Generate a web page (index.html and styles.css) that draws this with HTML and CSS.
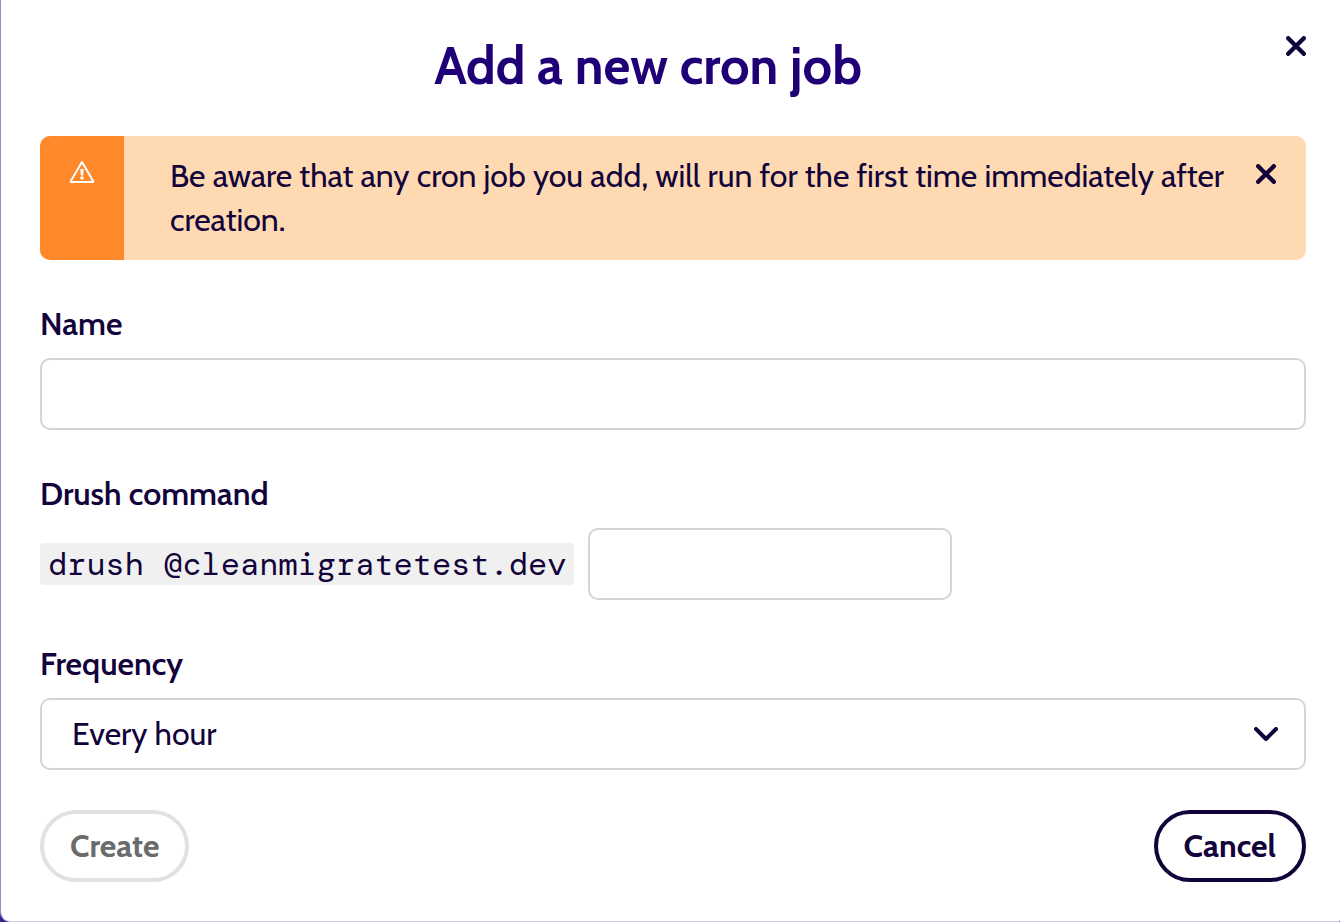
FILE: index.html
```
<!DOCTYPE html>
<html lang="en">
<head>
  <meta charset="UTF-8">
  <meta name="viewport" content="width=device-width, initial-scale=1.0">
  <title>Add a new cron job</title>
  <link rel="stylesheet" href="styles.css">
</head>
<body>
  <div class="modal" role="dialog" aria-labelledby="modal-title">
    <header class="modal-header">
      <h1 class="modal-title" id="modal-title">Add a new cron job</h1>
      <button type="button" class="close-button" aria-label="Close">
        <svg class="icon-close" viewBox="0 0 20 20"><path d="M2.200 2.200l15.600 15.600M17.800 2.200L2.200 17.800"/></svg>
      </button>
    </header>

    <div class="alert" role="alert">
      <div class="alert-icon">
        <svg class="icon-warning" viewBox="0 0 26 24">
          <path class="triangle" d="M13 2L1.700 21.200Q1.400 22 2.200 22H23.800Q24.600 22 24.300 21.200Z"/>
          <path class="mark" d="M11.400 9h3.200l-.4 6.500h-2.400z"/>
          <circle class="mark" cx="13" cy="18" r="1.700"/>
        </svg>
      </div>
      <p class="alert-text">Be aware that any cron job you add, will run for the first time immediately after creation.</p>
      <button type="button" class="close-button alert-close" aria-label="Dismiss">
        <svg class="icon-close" viewBox="0 0 20 20"><path d="M2.200 2.200l15.600 15.600M17.800 2.200L2.200 17.800"/></svg>
      </button>
    </div>

    <form class="cron-form">
      <div class="field">
        <label class="field-label" for="name">Name</label>
        <input class="field-control" type="text" id="name">
      </div>

      <div class="field">
        <label class="field-label" for="command">Drush command</label>
        <div class="command-row">
          <code class="command-prefix">drush @cleanmigratetest.dev</code>
          <input class="field-control command-input" type="text" id="command">
        </div>
      </div>

      <div class="field">
        <label class="field-label" for="frequency">Frequency</label>
        <div class="select-wrap">
          <select class="field-control field-select" id="frequency">
            <option>Every hour</option>
          </select>
          <svg class="icon-chevron" viewBox="0 0 24 14"><path d="M2 2l10 10L22 2"/></svg>
        </div>
      </div>

      <div class="actions">
        <button type="submit" class="button" disabled>Create</button>
        <button type="button" class="button">Cancel</button>
      </div>
    </form>
  </div>
</body>
</html>
```
FILE: styles.css
```
* {
  box-sizing: border-box;
}

body {
  margin: 0;
  background-color: #3f1f8f;
  color: #12033a;
  font-family: Cabin, Lato, sans-serif;
  font-size: 32px;
  line-height: 44px;
}

.modal {
  padding: 36px 34px 39px 39px;
  border: solid #998bc8;
  border-width: 0 0 1px 1px;
  border-bottom-color: #cfcde0;
  border-radius: 0 0 2px 10px;
  background-color: #fff;
}

/* Header */
.modal-header {
  display: flex;
  align-items: flex-start;
  gap: 30px;
  margin-bottom: 40px;
}

.modal-title {
  flex: 1;
  margin: 0;
  color: #200077;
  font-size: 52px;
  font-weight: 700;
  line-height: 60px;
  text-align: center;
}

.close-button {
  flex: none;
  display: block;
  width: 20px;
  height: 20px;
  padding: 0;
  border: 0;
  background: none;
  color: inherit;
  cursor: pointer;
}

.icon-close {
  display: block;
  width: 20px;
  height: 20px;
  fill: none;
  stroke: currentColor;
  stroke-width: 4.4;
  stroke-linecap: round;
}

/* Warning */
.alert {
  display: flex;
  align-items: flex-start;
  margin-bottom: 42px;
  border-radius: 10px;
  background-color: #ffd9b1;
  overflow: hidden;
}

.alert-icon {
  flex: none;
  align-self: stretch;
  display: flex;
  justify-content: center;
  width: 84px;
  padding-top: 24px;
  background-color: #ff882b;
}

.icon-warning {
  width: 26px;
  height: 24px;
}

.triangle {
  fill: none;
  stroke: #fff;
  stroke-width: 2;
  stroke-linejoin: round;
}

.mark {
  fill: #fff;
}

.alert-text {
  flex: 1;
  margin: 0;
  padding: 18px 28px 18px 46px;
}

.alert-close {
  margin: 28px 30px 0 0;
}

/* Form */
.cron-form {
  display: flex;
  flex-direction: column;
  gap: 42px;
}

.field {
  display: flex;
  flex-direction: column;
  gap: 12px;
}

.field-label {
  font-weight: 600;
}

.field-control {
  width: 100%;
  height: 72px;
  padding: 0 30px;
  border: 2px solid #d3d5da;
  border-radius: 10px;
  background-color: #fff;
  color: inherit;
  font: inherit;
}

.command-row {
  display: flex;
  align-items: center;
  gap: 14px;
}

.command-prefix {
  padding: 0 8px;
  border-radius: 4px;
  background-color: #f0f0f0;
  font-family: "DM Mono", "Liberation Mono", monospace;
  font-size: 32px;
  line-height: 42px;
}

.command-input {
  width: 364px;
}

.select-wrap {
  position: relative;
}

.field-select {
  display: block;
  appearance: none;
}

.icon-chevron {
  position: absolute;
  top: 29px;
  right: 28px;
  width: 24px;
  height: 14px;
  fill: none;
  stroke: currentColor;
  stroke-width: 4;
  stroke-linecap: round;
  stroke-linejoin: round;
  pointer-events: none;
}

/* Buttons */
.actions {
  display: flex;
  justify-content: space-between;
  margin-top: -2px;
}

.button {
  height: 72px;
  padding: 0 26px;
  border: 4px solid #12033a;
  border-radius: 36px;
  background-color: #fff;
  color: #12033a;
  font: inherit;
  font-weight: 700;
  cursor: pointer;
}

.button:disabled {
  border-color: #e1e1e1;
  color: #6b6b6b;
  cursor: default;
}
```
